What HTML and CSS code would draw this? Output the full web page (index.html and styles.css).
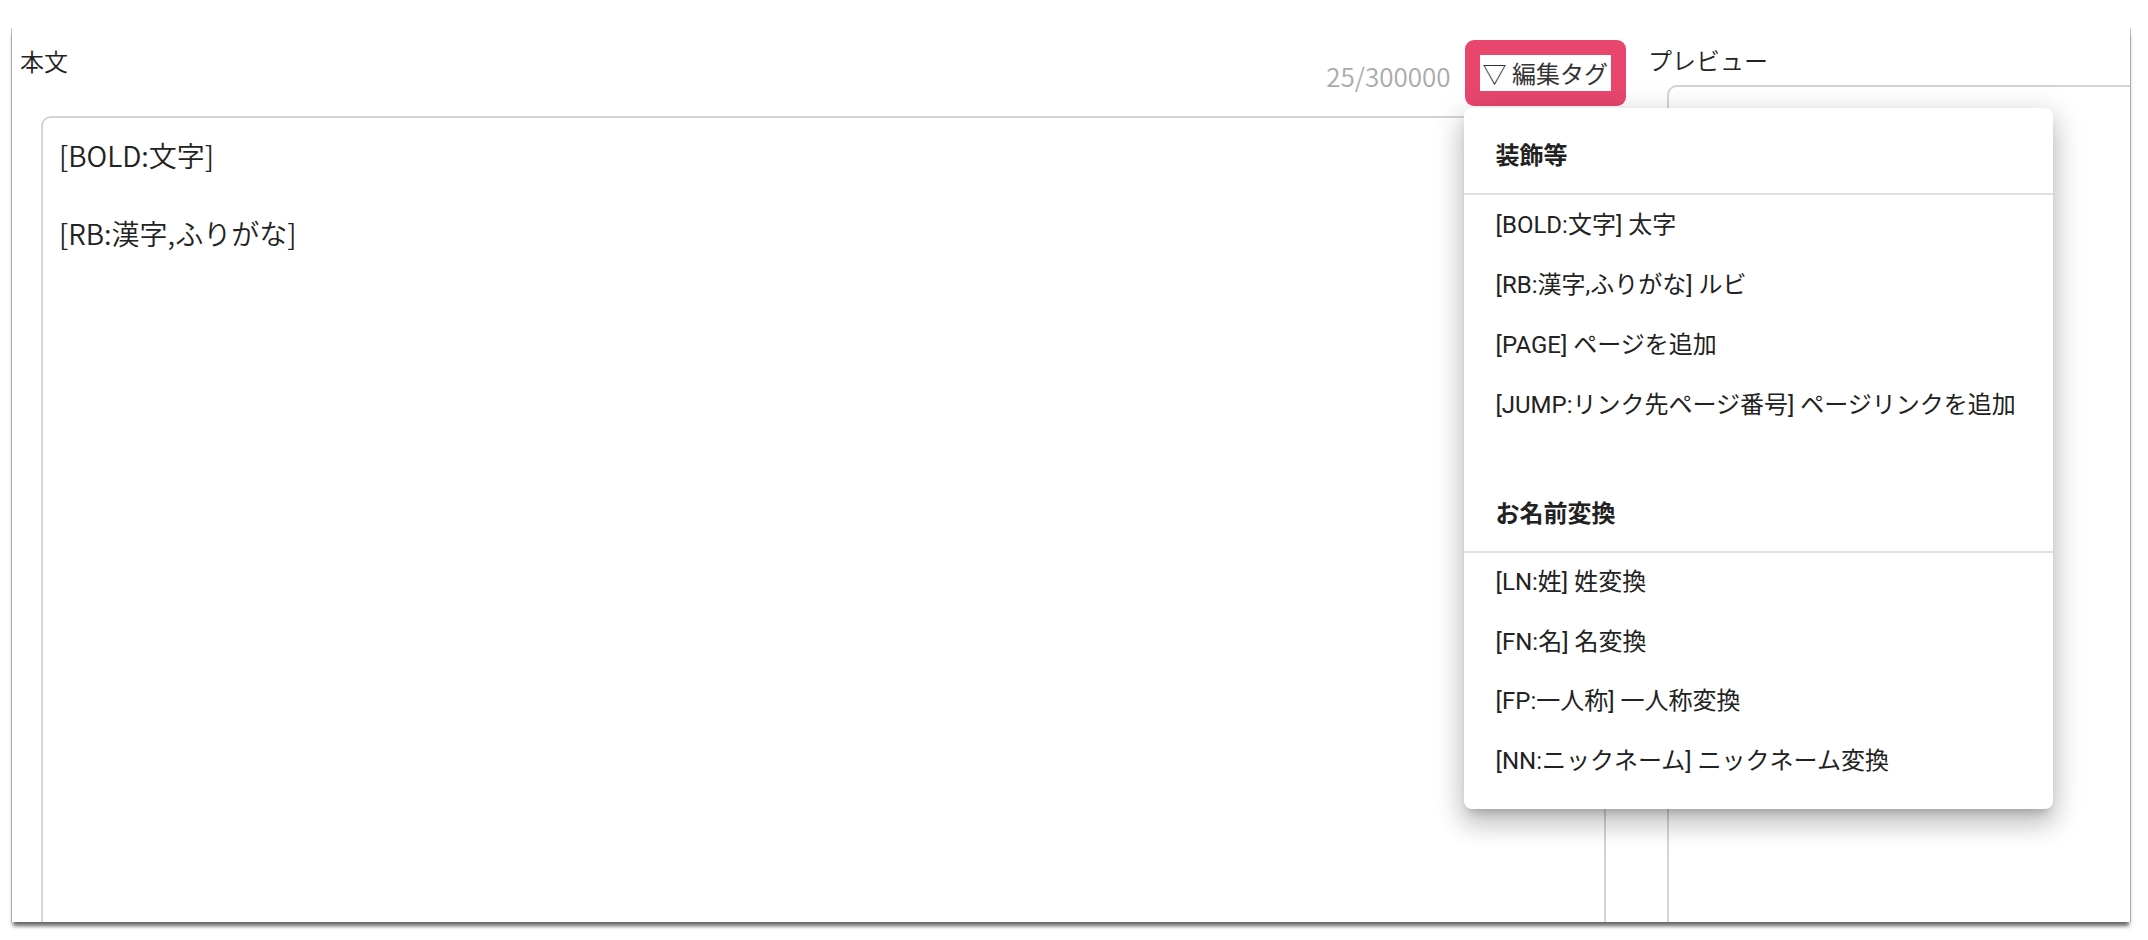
FILE: index.html
```html
<!DOCTYPE html>
<html lang="ja">
<head>
  <meta charset="UTF-8">
  <title>本文エディタ</title>
  <link rel="stylesheet" href="styles.css">
</head>
<body>
  <div class="window">
    <section class="editor">
      <div class="editor-head">
        <span class="label">本文</span>
        <span class="counter">25/300000</span>
        <div class="tag-menu">
          <button class="tag-btn"><span>▽ 編集タグ</span></button>
          <div class="dropdown">
            <div class="menu-group">
              <div class="menu-head">装飾等</div>
              <div class="menu-item">[BOLD:文字] 太字</div>
              <div class="menu-item">[RB:漢字,ふりがな] ルビ</div>
              <div class="menu-item">[PAGE] ページを追加</div>
              <div class="menu-item">[JUMP:リンク先ページ番号] ページリンクを追加</div>
            </div>
            <div class="menu-group">
              <div class="menu-head">お名前変換</div>
              <div class="menu-item">[LN:姓] 姓変換</div>
              <div class="menu-item">[FN:名] 名変換</div>
              <div class="menu-item">[FP:一人称] 一人称変換</div>
              <div class="menu-item">[NN:ニックネーム] ニックネーム変換</div>
            </div>
          </div>
        </div>
      </div>
      <textarea class="body-input">[BOLD:文字]

[RB:漢字,ふりがな]</textarea>
    </section>
    <section class="preview">
      <div class="label">プレビュー</div>
      <div class="preview-box"></div>
    </section>
  </div>
</body>
</html>
```

FILE: styles.css
```css
html, body {
  margin: 0;
  height: 100%;
  overflow: hidden;
  background-color: #fff;
}
body {
  font-family: "Noto Sans CJK JP", sans-serif;
  font-weight: 350;
  color: #222;
}
.window {
  display: flex;
  height: 894px;
  margin: 28px 18px 0 12px;
  padding-left: 8px;
  background-color: #fff;
  overflow: hidden;
  box-shadow: -1px 0 0 rgba(0, 0, 0, .22), 1px 0 0 rgba(0, 0, 0, .22), 0 5px 4px -1px rgba(0, 0, 0, .6);
}
.editor {
  width: 1606px;
  flex-shrink: 0;
}
.editor-head {
  display: flex;
  align-items: flex-start;
  height: 65px;
  margin-top: 12px;
}
.label {
  font-size: 24px;
  line-height: 36px;
}
.editor-head .label {
  padding-top: 3px;
  margin-right: auto;
}
.counter {
  padding-top: 16px;
  margin-right: 14px;
  font-size: 26px;
  line-height: 40px;
  color: #aaa;
}
.tag-menu {
  position: relative;
}
.tag-btn {
  display: block;
  padding: 15px;
  border: none;
  border-radius: 9px;
  background-color: #e9466e;
  font-family: inherit;
  cursor: pointer;
}
.tag-btn span {
  display: block;
  padding: 0 3px;
  background-color: #fff;
  font-size: 24px;
  font-weight: 400;
  line-height: 36px;
  color: #333;
}
.dropdown {
  position: absolute;
  top: 68px;
  left: -1px;
  z-index: 2;
  width: 589px;
  padding-bottom: 18px;
  border-radius: 8px;
  background-color: #fff;
  font-family: Roboto, "Noto Sans CJK JP", sans-serif;
  font-size: 24px;
  font-weight: 400;
  color: #222;
  box-shadow: 0 8px 10px -5px rgba(0, 0, 0, .2), 0 16px 24px 2px rgba(0, 0, 0, .14), 0 6px 30px 5px rgba(0, 0, 0, .12);
}
.menu-group + .menu-group {
  margin-top: 31px;
}
.menu-head {
  padding: 32px 32px 20px;
  line-height: 33px;
  font-weight: bold;
  border-bottom: 2px solid #e0e0e0;
}
.menu-item {
  height: 60px;
  padding-left: 32px;
  line-height: 60px;
  white-space: nowrap;
}
.menu-group + .menu-group .menu-item {
  height: 59.5px;
  line-height: 59.5px;
}
.body-input {
  display: block;
  box-sizing: border-box;
  width: 1565px;
  height: 830px;
  margin: 11px 0 0 21px;
  padding: 18px 16px;
  border: 2px solid #d4d4d4;
  border-radius: 10px;
  font-family: "Noto Sans CJK JP", sans-serif;
  font-size: 28px;
  font-weight: 350;
  line-height: 1.4;
  color: #222;
  resize: none;
  outline: none;
}
.preview {
  flex-shrink: 0;
  margin-left: 22px;
  padding-top: 14px;
}
.preview-box {
  width: 520px;
  height: 900px;
  margin: 7px 0 0 19px;
  border: 2px solid #d4d4d4;
  border-radius: 10px;
}
```
